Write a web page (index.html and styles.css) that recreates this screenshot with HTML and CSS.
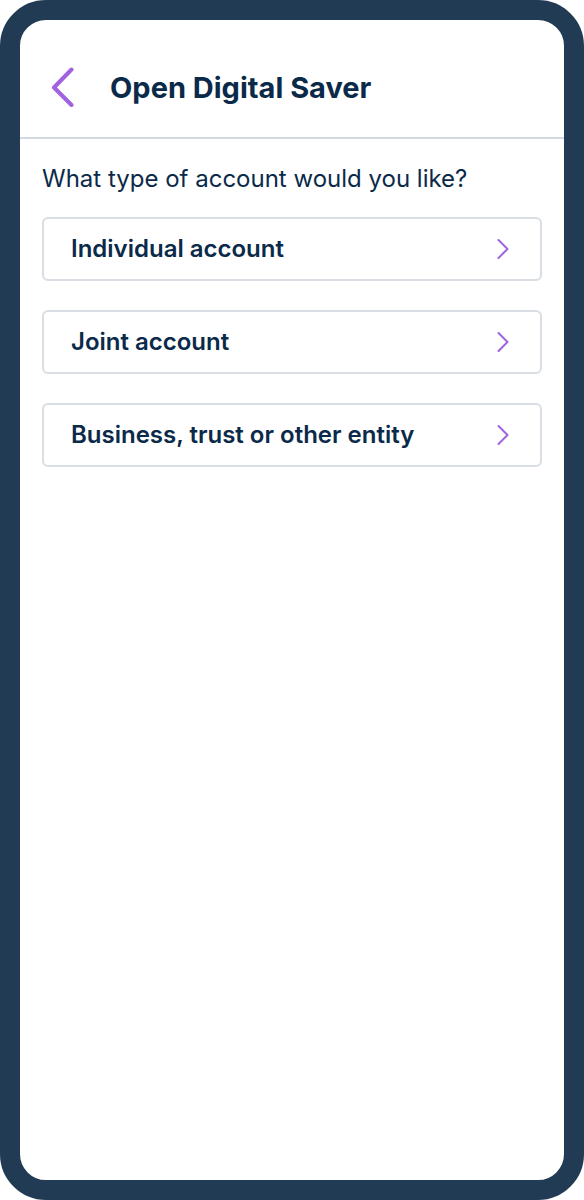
FILE: index.html
```html
<!DOCTYPE html>
<html lang="en">
<head>
<meta charset="utf-8">
<meta name="viewport" content="width=device-width, initial-scale=1">
<title>Open Digital Saver</title>
<link rel="stylesheet" href="styles.css">
</head>
<body>
<div class="device">
  <header class="topbar">
    <button class="back" type="button" aria-label="Back">
      <svg class="back-icon" viewBox="0 0 24 42" width="24" height="42" aria-hidden="true"><path d="M21.5 3.5 4 21.5 21.5 39"/></svg>
    </button>
    <h1 class="title">Open Digital Saver</h1>
  </header>
  <main class="content">
    <h2 class="question">What type of account would you like?</h2>
    <div class="options">
      <button class="option" type="button">
        <span>Individual account</span>
        <svg class="chevron" viewBox="0 0 14 22" width="14" height="22" aria-hidden="true"><path d="M2.500 2 11.500 11 2.500 20"/></svg>
      </button>
      <button class="option" type="button">
        <span>Joint account</span>
        <svg class="chevron" viewBox="0 0 14 22" width="14" height="22" aria-hidden="true"><path d="M2.500 2 11.500 11 2.500 20"/></svg>
      </button>
      <button class="option" type="button">
        <span>Business, trust or other entity</span>
        <svg class="chevron" viewBox="0 0 14 22" width="14" height="22" aria-hidden="true"><path d="M2.500 2 11.500 11 2.500 20"/></svg>
      </button>
    </div>
  </main>
</div>
</body>
</html>
```
FILE: styles.css
```css
* {
  box-sizing: border-box;
}

body {
  margin: 0;
  background: #fff;
  color: #0b2a4a;
  font-family: Inter, "Liberation Sans", sans-serif;
}

.device {
  min-height: 100vh;
  border: 20px solid #223b54;
  border-radius: 46px;
  background: #fff;
}

.topbar {
  display: flex;
  align-items: center;
  gap: 36px;
  padding: 46px 30px 29px;
  border-bottom: 2px solid #d3d9e0;
}

.back {
  display: flex;
  padding: 0;
  border: 0;
  background: none;
}

.back-icon,
.chevron {
  flex: none;
  fill: none;
  stroke: #a062e0;
  stroke-linecap: round;
  stroke-linejoin: round;
}

.back-icon {
  stroke-width: 4;
}

.chevron {
  stroke-width: 2;
}

.title {
  margin: 0;
  padding-top: 2px;
  font-size: 29px;
  font-weight: 700;
  line-height: 40px;
}

.content {
  padding: 22px;
}

.question {
  margin: 0 0 20px;
  font-size: 24px;
  font-weight: 400;
  line-height: 36px;
}

.options {
  display: grid;
  gap: 29px;
}

.option {
  display: flex;
  align-items: center;
  justify-content: space-between;
  width: 100%;
  padding: 13px 30px 13px 27px;
  border: 2px solid #d9dee4;
  border-radius: 6px;
  background: #fff;
  color: inherit;
  font: 600 24px/34px Inter, "Liberation Sans", sans-serif;
  text-align: left;
}
```
